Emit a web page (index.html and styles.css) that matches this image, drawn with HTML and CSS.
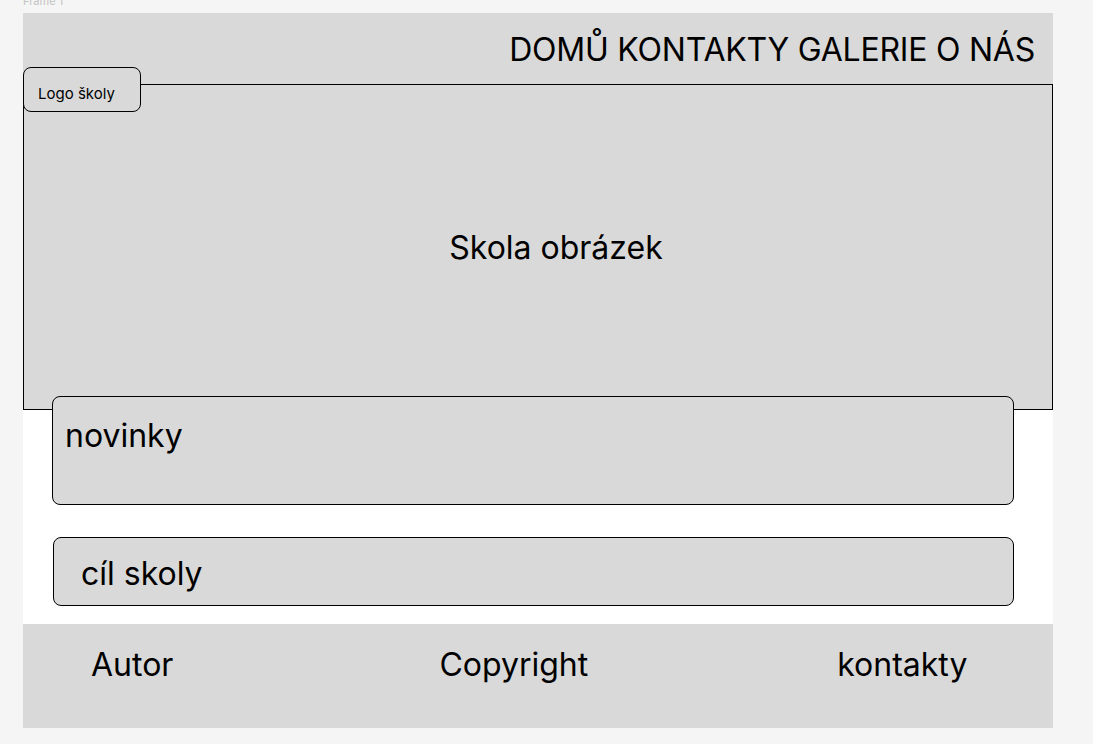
FILE: index.html
```html
<!DOCTYPE html>
<html lang="cs">
<head>
<meta charset="utf-8">
<title>Frame 1</title>
<link rel="stylesheet" href="styles.css">
</head>
<body>
<div class="frame">
  <div class="frame-label">Frame 1</div>
  <header class="topbar">
    <nav class="nav">DOMŮ KONTAKTY GALERIE O NÁS</nav>
  </header>
  <section class="hero">
    <div class="logo">Logo školy</div>
    <div class="hero-text">Skola obrázek</div>
  </section>
  <section class="card news">novinky</section>
  <section class="card goal">cíl skoly</section>
  <footer class="footer">
    <span class="f-author">Autor</span>
    <span class="f-copy">Copyright</span>
    <span class="f-contact">kontakty</span>
  </footer>
</div>
</body>
</html>
```

FILE: styles.css
```css
* { box-sizing: border-box; }
html, body { margin: 0; padding: 0; }
body {
  background: #f5f5f5;
  font-family: Inter, "Noto Sans", sans-serif;
  color: #000;
  height: 744px;
  overflow: hidden;
}
.frame {
  position: relative;
  margin: 13px 0 0 23px;
  width: 1030px;
  height: 715px;
  background: #fff;
  display: flex;
  flex-direction: column;
}
.frame-label {
  position: absolute;
  top: -18px;
  left: 0;
  font-size: 11px;
  line-height: 13px;
  color: #c4c4c4;
}
.topbar {
  height: 71px;
  background: #d9d9d9;
  display: flex;
  align-items: center;
  justify-content: flex-end;
  padding-right: 18px;
}
.nav {
  font-size: 32px;
  line-height: 39px;
  padding-top: 2px;
  letter-spacing: -0.23px;
}
.hero {
  position: relative;
  height: 326px;
  background: #d9d9d9;
  border: 1px solid #000;
  display: flex;
  align-items: center;
  justify-content: center;
  padding-left: 36px;
}
.hero-text {
  font-size: 32px;
  line-height: 39px;
}
.logo {
  position: absolute;
  top: -18px;
  left: -1px;
  width: 118px;
  height: 45px;
  border: 1px solid #000;
  border-radius: 8px;
  background: #d9d9d9;
  font-size: 15px;
  line-height: 18px;
  padding: 17px 0 0 14px;
}
.card {
  background: #d9d9d9;
  border: 1px solid #000;
  border-radius: 8px;
  font-size: 32px;
  line-height: 39px;
  position: relative;
}
.news {
  margin: -14px 0 0 29px;
  width: 962px;
  height: 109px;
  padding: 19px 0 0 12px;
}
.goal {
  margin: 32px 0 0 30px;
  width: 961px;
  height: 69px;
  padding: 16px 0 0 27px;
}
.footer {
  margin-top: 18px;
  flex: 1;
  background: #d9d9d9;
  display: flex;
  align-items: flex-start;
  padding: 21px 0 0 68px;
  font-size: 32px;
  line-height: 39px;
}
.f-copy { margin-left: 266px; }
.f-contact { margin-left: 249px; }
```
